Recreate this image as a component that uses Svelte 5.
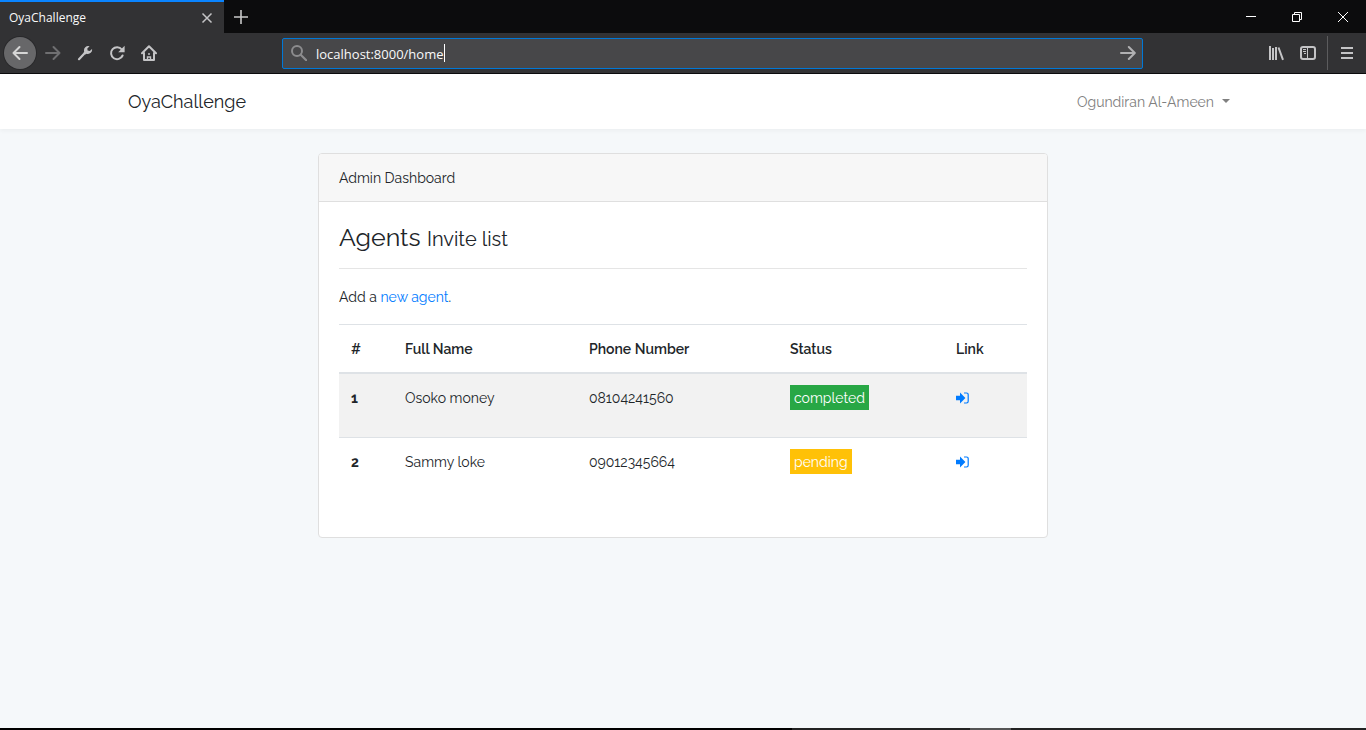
<script>
  const agents = [
    { id: 1, name: 'Osoko money', phone: '08104241560', status: 'completed' },
    { id: 2, name: 'Sammy loke', phone: '09012345664', status: 'pending' }
  ];
  let address = $state('localhost:8000/home');
</script>

<div class="window">
  <header class="chrome">
    <div class="titlebar">
      <div class="tab">
        <span class="tab-title">OyaChallenge</span>
        <button class="plain" aria-label="Close tab">
          <svg width="12" height="12" viewBox="0 0 12 12"><path d="M1.5 1.5l9 9M10.5 1.5l-9 9" stroke="#c4c4c6" stroke-width="1.5" /></svg>
        </button>
      </div>
      <button class="plain new-tab" aria-label="New tab">
        <svg width="14" height="14" viewBox="0 0 14 14"><path d="M7 0v14M0 7h14" stroke="#c9c9c9" stroke-width="1.6" /></svg>
      </button>
      <div class="window-controls">
        <button class="plain" aria-label="Minimize">
          <svg width="10" height="10" viewBox="0 0 10 10"><path d="M0 4.5h10" stroke="#fff" /></svg>
        </button>
        <button class="plain" aria-label="Restore">
          <svg width="10" height="10" viewBox="0 0 10 10" fill="none" stroke="#fff"><path d="M.5 2.5h7v7h-7zM2.500 2.500v-2h7v7h-2" /></svg>
        </button>
        <button class="plain" aria-label="Close">
          <svg width="10" height="10" viewBox="0 0 10 10"><path d="M0 0l10 10M10 0L0 10" stroke="#fff" /></svg>
        </button>
      </div>
    </div>

    <div class="toolbar">
      <div class="nav-buttons">
        <button class="plain back" aria-label="Back">
          <svg width="16" height="16" viewBox="0 0 16 16" fill="none" stroke="#d6d6d6" stroke-width="2" stroke-linecap="round" stroke-linejoin="round"><path d="M15 8H1.500M7.500 2l-6 6 6 6" /></svg>
        </button>
        <button class="plain" aria-label="Forward">
          <svg width="16" height="16" viewBox="0 0 16 16" fill="none" stroke="#6f6f71" stroke-width="2" stroke-linecap="round" stroke-linejoin="round"><path d="M1 8h13.500M8.500 2l6 6-6 6" /></svg>
        </button>
        <button class="plain" aria-label="Developer tools">
          <svg width="16" height="16" viewBox="0 0 16 16"><path d="M2 14.200L8.300 7.600" stroke="#c4c4c6" stroke-width="2.200" stroke-linecap="round" /><path d="M12.600 1.300A4.200 4.200 0 0 0 7.200 6.500L6.600 8l1.500 1.500 1.600-.7A4.200 4.200 0 0 0 15 3.900l-2.200 2-2.200-.3-.3-2.200z" fill="#c4c4c6" /></svg>
        </button>
        <button class="plain" aria-label="Reload">
          <svg width="16" height="16" viewBox="0 0 16 16"><path d="M12.800 4.500A6 6 0 1 0 13.600 10.500" fill="none" stroke="#c4c4c6" stroke-width="2" stroke-linecap="round" /><path d="M15.600 .8v6.400H9.200z" fill="#c4c4c6" /></svg>
        </button>
        <button class="plain" aria-label="Home">
          <svg width="16" height="16" viewBox="0 0 16 16" fill="none" stroke="#c4c4c6" stroke-width="2" stroke-linejoin="round" stroke-linecap="round"><path d="M1 8.300L8 1.200l7 7.100M3 8v7h10V8" /><path d="M8 8v2M6.500 15v-3h3v3" stroke-width="1.400" stroke-linecap="butt" stroke-linejoin="miter" /></svg>
        </button>
      </div>

      <div class="address">
        <label for="address" aria-label="Search or enter address">
          <svg width="16" height="16" viewBox="0 0 16 16" fill="none" stroke="#8c8c8e" stroke-width="2"><circle cx="6" cy="6" r="5" /><path d="M9.700 9.700l5.600 5.600" stroke-width="2.200" stroke-linecap="round" /></svg>
        </label>
        <div class="field">
          <input id="address" type="text" bind:value={address} size="1" spellcheck="false" />
          <i class="caret"></i>
        </div>
        <button class="plain" aria-label="Go">
          <svg width="16" height="16" viewBox="0 0 16 16" fill="none" stroke="#b1b1b3" stroke-width="2" stroke-linecap="round" stroke-linejoin="round"><path d="M1 8h13.500M8.800 2l6 6-6 6" /></svg>
        </button>
      </div>

      <div class="tools">
        <button class="plain" aria-label="Library">
          <svg width="16" height="16" viewBox="0 0 16 16" stroke="#c4c4c6" stroke-width="2"><path d="M2 1v14M5 3v12M8 2v13M10.500 2.500L15 14.800" /></svg>
        </button>
        <button class="plain" aria-label="Sidebars">
          <svg width="16" height="16" viewBox="0 0 16 16" fill="none" stroke="#c4c4c6"><rect x="1" y="2" width="14" height="12" rx="2" stroke-width="2" /><path d="M7.500 2v12M3 4.500h3M3 6.500h3M4 8.500h2" /></svg>
        </button>
        <span class="divider"></span>
        <button class="plain" aria-label="Open menu">
          <svg width="12" height="12" viewBox="0 0 12 12" stroke="#c4c4c6" stroke-width="2"><path d="M0 1h12M0 6h12M0 11h12" /></svg>
        </button>
      </div>
    </div>
  </header>

  <nav class="navbar">
    <div class="container">
      <a class="brand" href="#home">OyaChallenge</a>
      <button class="plain user">Ogundiran Al-Ameen <i class="arrow"></i></button>
    </div>
  </nav>

  <main>
    <section class="card">
      <div class="card-header">Admin Dashboard</div>
      <div class="card-body">
        <h3>Agents <small>Invite list</small></h3>
        <hr />
        <p>Add a <a href="#new-agent">new agent</a>.</p>
        <table>
          <colgroup><col class="c-id" /><col class="c-name" /><col class="c-phone" /><col class="c-status" /><col /></colgroup>
          <thead>
            <tr><th scope="col">#</th><th scope="col">Full Name</th><th scope="col">Phone Number</th><th scope="col">Status</th><th scope="col">Link</th></tr>
          </thead>
          <tbody>
            {#each agents as agent (agent.id)}
              <tr>
                <th scope="row">{agent.id}</th>
                <td>{agent.name}</td>
                <td>{agent.phone}</td>
                <td class="state"><span class="badge {agent.status}">{agent.status}</span></td>
                <td>
                  <a href="#agent-{agent.id}" aria-label="Open {agent.name}">
                    <svg class="sign-in" width="13" height="12" viewBox="0 0 13 12"><path d="M0 3.800h4V.6L9.400 6 4 11.400V8.200H0z" fill="#007bff" /><path d="M8 1h2.500A1.700 1.700 0 0 1 12.200 2.700v6.600A1.700 1.700 0 0 1 10.500 11H8" fill="none" stroke="#007bff" stroke-width="1.200" /></svg>
                  </a>
                </td>
              </tr>
            {/each}
          </tbody>
        </table>
      </div>
    </section>
  </main>

  <footer class="taskbar"><i class="start"></i><i class="apps"></i><i class="active"></i><i class="tray"></i></footer>
</div>

<style>
  :global(body) { margin: 0; }
  .window {
    min-height: 100vh;
    display: flex;
    flex-direction: column;
    background: #f5f8fa;
    color: #212529;
    font: 14px/23px Raleway, Lato, sans-serif;
  }
  .window :global(*) { box-sizing: border-box; }
  svg { display: block; flex: none; }
  a { color: #007bff; text-decoration: none; }
  .plain {
    display: flex;
    align-items: center;
    justify-content: center;
    padding: 0;
    border: 0;
    background: none;
    color: inherit;
    font: inherit;
  }

  .chrome { font-family: "Segoe UI", "Open Sans", sans-serif; }
  .titlebar { display: flex; height: 33px; background: #0c0c0d; }
  .tab {
    display: flex;
    align-items: center;
    justify-content: space-between;
    width: 224px;
    padding: 0 11px 0 9px;
    border-top: 2px solid #0a84ff;
    background: #323234;
    color: #f9f9fa;
    font-size: 12px;
  }
  .new-tab { width: 34px; }
  .window-controls { display: flex; margin-left: auto; }
  .window-controls button { width: 46px; }

  .toolbar {
    display: flex;
    align-items: center;
    justify-content: space-between;
    height: 41px;
    padding-left: 4px;
    background: #323234;
    border-bottom: 1px solid #0c0c0d;
  }
  .nav-buttons { display: flex; width: 278px; }
  .nav-buttons button { width: 32px; height: 32px; }
  .nav-buttons .back {
    margin-right: 1px;
    border-radius: 50%;
    background: #676769;
    box-shadow: 0 0 0 1px #29292b;
  }
  .address {
    display: flex;
    align-items: center;
    flex: 1;
    height: 31px;
    gap: 9px;
    padding: 0 6px 0 8px;
    border: 1px solid #0078d7;
    border-radius: 2px;
    background: #474749;
  }
  .field { display: flex; align-items: center; flex: 1; }
  .field input {
    field-sizing: content;
    padding: 1px 0 0;
    border: 0;
    outline: 0;
    background: none;
    color: #f9f9fa;
    font: 13px/20px "Segoe UI", "Open Sans", sans-serif;
  }
  .caret { width: 1px; height: 18px; background: #fff; }
  .tools { display: flex; align-items: center; justify-content: flex-end; width: 223px; padding-right: 3px; }
  .tools button { width: 32px; height: 32px; }
  .tools .divider { width: 1px; height: 34px; margin: 0 3px; background: #5c5c5e; }

  .navbar { height: 55px; background: #fff; box-shadow: 0 2px 4px rgba(0, 0, 0, 0.04); }
  .container {
    display: flex;
    align-items: center;
    justify-content: space-between;
    height: 100%;
    max-width: 1140px;
    margin: 0 auto;
    padding: 0 23px 0 15px;
  }
  .brand { color: #212529; font-size: 18px; }
  .user { gap: 8px; padding-top: 2px; color: #808080; }
  .arrow { margin-bottom: 4px; border: 4px solid transparent; border-top-color: #808080; border-bottom: 0; }

  main { flex: 1; padding: 24px 15px; }
  .card {
    max-width: 730px;
    margin: 0 auto;
    border: 1px solid #dfdfdf;
    border-radius: 4px;
    background: #fff;
  }
  .card-header { padding: 13px 20px 11px; border-bottom: 1px solid #dfdfdf; border-radius: 3px 3px 0 0; background: #f7f7f7; }
  .card-body { padding: 20px; }
  h3 { margin: 0; font-size: 25px; font-weight: 400; line-height: 30px; }
  small { font-size: 20px; line-height: 20px; }
  hr { margin: 16px 0; border: 0; border-top: 1px solid #e5e5e5; }
  p { margin: 0 0 15px; padding-top: 1px; }
  table { width: 100%; margin-bottom: 16px; border-collapse: collapse; table-layout: fixed; }
  .c-id { width: 54px; }
  .c-name { width: 184px; }
  .c-phone { width: 201px; }
  .c-status { width: 166px; }
  th, td { padding: 13px 12px 11px; border-top: 1px solid #dee2e6; text-align: left; vertical-align: top; }
  th { font-weight: 600; }
  thead th { border-bottom: 2px solid #dee2e6; }
  tbody th { font-weight: 700; }
  tbody tr:nth-child(odd) { background: #f2f2f2; }
  .state { padding: 11px 12px 27px; }
  .badge { display: block; width: fit-content; padding: 2px 4px 0; color: #fff; }
  .completed { background: #28a745; }
  .pending { background: #ffc107; }
  .sign-in { margin-top: 5px; }

  .taskbar { display: flex; height: 2px; background: #000; }
  .start { width: 58%; }
  .apps { width: 13%; background: #222; }
  .active { width: 3%; background: #555; }
  .tray { flex: 1; background: #222; }
</style>
